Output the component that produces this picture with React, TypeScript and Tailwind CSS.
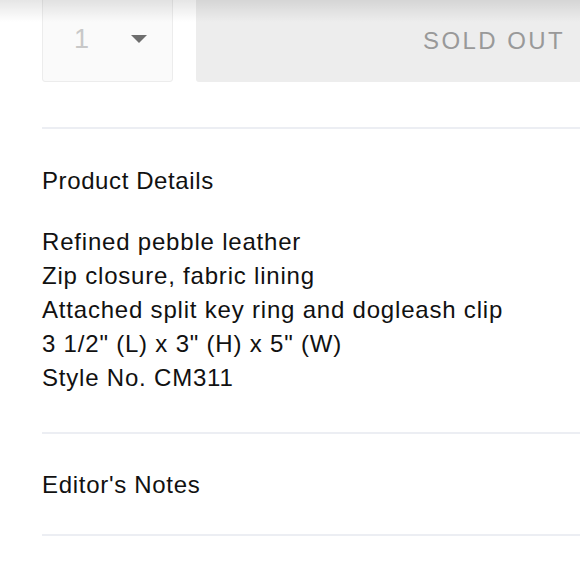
import React from "react";

const details = [
  "Refined pebble leather",
  "Zip closure, fabric lining",
  "Attached split key ring and dogleash clip",
  '3 1/2" (L) x 3" (H) x 5" (W)',
  "Style No. CM311",
];

export default function App() {
  return (
    <div
      className="relative w-[580px] h-[580px] overflow-hidden bg-white text-[#111]"
      style={{ fontFamily: '"Liberation Sans", Arial, sans-serif' }}
    >
      {/* shadow from the header above */}
      <div className="pointer-events-none absolute top-0 inset-x-0 h-[22px] bg-gradient-to-b from-black/10 to-transparent" />

      <div className="pl-[42px]">
        {/* quantity + add to bag */}
        <div className="flex gap-[23px] h-[86px] -mt-[4px]">
          <div className="w-[131px] flex items-center border border-[#ececec] rounded-[3px] bg-[#fafafa] pl-[31px]">
            <span className="text-[27px] text-[#c8c8c8] leading-none">1</span>
            <svg width="16" height="8" viewBox="0 0 16 8" className="ml-[42px]">
              <path d="M0 0 H16 L8 8 Z" fill="#6e6e6e" />
            </svg>
          </div>
          <button className="flex-1 flex items-center justify-end pr-[15px] bg-[#ededed] rounded-l-[3px] text-[24px] tracking-[2.4px] text-[#999] pt-[4px]">
            SOLD OUT
          </button>
        </div>

        <div className="mt-[45px] h-[2px] bg-[#eceef3]" />

        <section className="text-[24px] leading-[34px] tracking-[0.8px]">
          <h2 className="mt-[35px] tracking-[0.6px]">Product Details</h2>
          <div className="mt-[27px]">
            {details.map((line) => (
              <p key={line}>{line}</p>
            ))}
          </div>
        </section>

        <div className="mt-[37px] h-[2px] bg-[#eceef3]" />

        <h2 className="mt-[34px] text-[24px] leading-[34px] tracking-[0.7px]">Editor's Notes</h2>

        <div className="mt-[32px] h-[2px] bg-[#eceef3]" />
      </div>
    </div>
  );
}
